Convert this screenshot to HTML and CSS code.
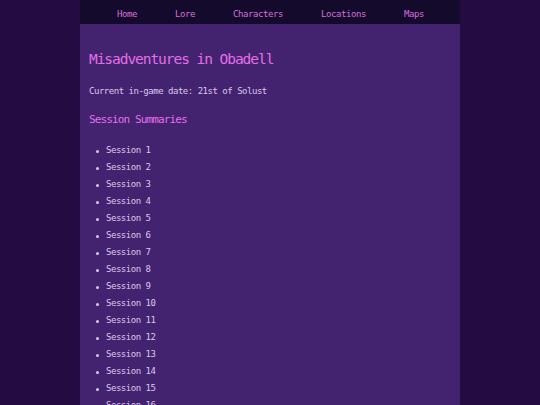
FILE: index.html
```html
<!DOCTYPE html>
<html>
<head>
<meta charset="utf-8">
<link rel="stylesheet" href="styles.css">
</head>
<body>
<div class="page">
  <nav class="nav">
    <a class="nav-link" href="#">Home</a>
    <a class="nav-link" href="#">Lore</a>
    <a class="nav-link" href="#">Characters</a>
    <a class="nav-link" href="#">Locations</a>
    <a class="nav-link" href="#">Maps</a>
  </nav>
  <main class="content">
    <h1 class="title">Misadventures in Obadell</h1>
    <p class="date">Current in-game date: 21st of Solust</p>
    <h2 class="section">Session Summaries</h2>
    <ul class="sessions">
      <li class="session">Session 1</li>
      <li class="session">Session 2</li>
      <li class="session">Session 3</li>
      <li class="session">Session 4</li>
      <li class="session">Session 5</li>
      <li class="session">Session 6</li>
      <li class="session">Session 7</li>
      <li class="session">Session 8</li>
      <li class="session">Session 9</li>
      <li class="session">Session 10</li>
      <li class="session">Session 11</li>
      <li class="session">Session 12</li>
      <li class="session">Session 13</li>
      <li class="session">Session 14</li>
      <li class="session">Session 15</li>
      <li class="session">Session 16</li>
    </ul>
  </main>
</div>
</body>
</html>
```
FILE: styles.css
```css
html, body {
  margin: 0;
  padding: 0;
  background: #240c42;
  height: 100%;
  overflow: hidden;
}
body {
  font-family: "DejaVu Sans Mono", "Liberation Mono", monospace;
  color: #dcc8ec;
}
.page {
  width: 380px;
  margin: 0 auto;
  background: #43236f;
  min-height: 100%;
}
.nav {
  height: 24px;
  background: #140a2c;
  display: flex;
  justify-content: center;
  align-items: flex-start;
  gap: 38px;
  padding-left: 1px;
  box-sizing: border-box;
}
.nav-link {
  color: #d46ede;
  text-decoration: none;
  font-size: 9px;
  letter-spacing: -0.42px;
  line-height: 17px;
  padding-top: 6px;
}
.content {
  padding: 0 9px;
}
.title {
  margin: 26px 0 0 0;
  font-size: 14.5px;
  font-weight: normal;
  letter-spacing: -1.05px;
  line-height: 18px;
  color: #e46ee8;
}
.date {
  margin: 15px 0 0 0;
  font-size: 9px;
  letter-spacing: -0.48px;
  line-height: 17px;
}
.section {
  margin: 11px 0 0 0;
  font-size: 11px;
  font-weight: normal;
  letter-spacing: -0.87px;
  line-height: 17px;
  color: #e46ee8;
}
.sessions {
  list-style: none;
  margin: 14px 0 0 0;
  padding: 0 0 0 7px;
}
.session {
  display: flex;
  align-items: center;
  font-size: 9px;
  letter-spacing: -0.48px;
  line-height: 17px;
}
.session::before {
  content: "";
  width: 3px;
  height: 3px;
  border-radius: 50%;
  background: #dcc8ec;
  margin-right: 7px;
  margin-top: 1px;
}
```
